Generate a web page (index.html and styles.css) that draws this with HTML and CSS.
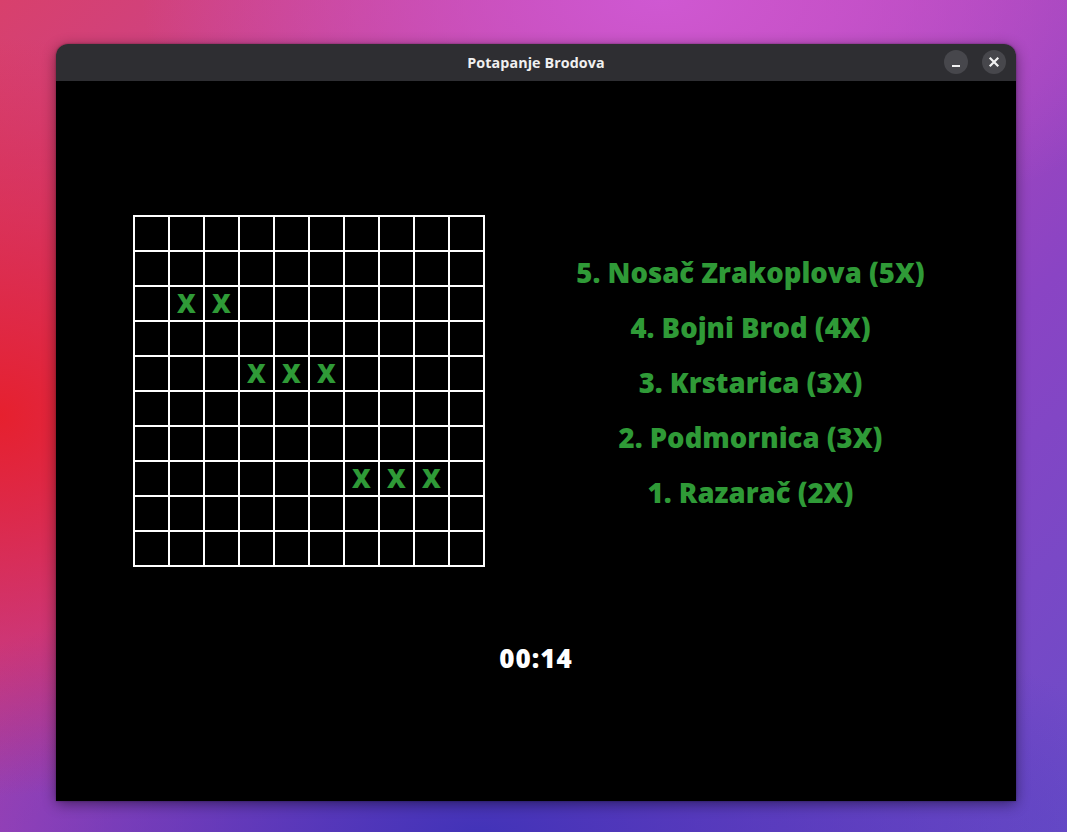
FILE: index.html
```html
<!DOCTYPE html>
<html lang="hr">
<head>
<meta charset="utf-8">
<title>Potapanje Brodova</title>
<link rel="stylesheet" href="styles.css">
</head>
<body>
<div class="window">
  <header class="titlebar">
    <span class="title">Potapanje Brodova</span>
    <div class="controls">
      <button class="wbtn" aria-label="minimize">
        <svg width="24" height="24" viewBox="0 0 24 24"><rect x="8" y="15" width="8" height="2" fill="#f2f2f2"/></svg>
      </button>
      <button class="wbtn" aria-label="close">
        <svg width="24" height="24" viewBox="0 0 24 24"><path d="M8.5 8.5 L15.5 15.5 M15.5 8.5 L8.5 15.5" stroke="#f2f2f2" stroke-width="2.2" stroke-linecap="square"/></svg>
      </button>
    </div>
  </header>
  <main class="content">
    <div class="row">
      <div class="board">
        <div class="cell"></div><div class="cell"></div><div class="cell"></div><div class="cell"></div><div class="cell"></div><div class="cell"></div><div class="cell"></div><div class="cell"></div><div class="cell"></div><div class="cell"></div>
        <div class="cell"></div><div class="cell"></div><div class="cell"></div><div class="cell"></div><div class="cell"></div><div class="cell"></div><div class="cell"></div><div class="cell"></div><div class="cell"></div><div class="cell"></div>
        <div class="cell"></div><div class="cell">X</div><div class="cell">X</div><div class="cell"></div><div class="cell"></div><div class="cell"></div><div class="cell"></div><div class="cell"></div><div class="cell"></div><div class="cell"></div>
        <div class="cell"></div><div class="cell"></div><div class="cell"></div><div class="cell"></div><div class="cell"></div><div class="cell"></div><div class="cell"></div><div class="cell"></div><div class="cell"></div><div class="cell"></div>
        <div class="cell"></div><div class="cell"></div><div class="cell"></div><div class="cell">X</div><div class="cell">X</div><div class="cell">X</div><div class="cell"></div><div class="cell"></div><div class="cell"></div><div class="cell"></div>
        <div class="cell"></div><div class="cell"></div><div class="cell"></div><div class="cell"></div><div class="cell"></div><div class="cell"></div><div class="cell"></div><div class="cell"></div><div class="cell"></div><div class="cell"></div>
        <div class="cell"></div><div class="cell"></div><div class="cell"></div><div class="cell"></div><div class="cell"></div><div class="cell"></div><div class="cell"></div><div class="cell"></div><div class="cell"></div><div class="cell"></div>
        <div class="cell"></div><div class="cell"></div><div class="cell"></div><div class="cell"></div><div class="cell"></div><div class="cell"></div><div class="cell">X</div><div class="cell">X</div><div class="cell">X</div><div class="cell"></div>
        <div class="cell"></div><div class="cell"></div><div class="cell"></div><div class="cell"></div><div class="cell"></div><div class="cell"></div><div class="cell"></div><div class="cell"></div><div class="cell"></div><div class="cell"></div>
        <div class="cell"></div><div class="cell"></div><div class="cell"></div><div class="cell"></div><div class="cell"></div><div class="cell"></div><div class="cell"></div><div class="cell"></div><div class="cell"></div><div class="cell"></div>
      </div>
      <ul class="ships">
        <li>5. Nosač Zrakoplova (5X)</li>
        <li>4. Bojni Brod (4X)</li>
        <li>3. Krstarica (3X)</li>
        <li>2. Podmornica (3X)</li>
        <li>1. Razarač (2X)</li>
      </ul>
    </div>
    <div class="timer">00:14</div>
  </main>
</div>
</body>
</html>
```

FILE: styles.css
```css
html, body {
  margin: 0;
  padding: 0;
  width: 1067px;
  height: 832px;
  overflow: hidden;
}

body {
  font-family: "Open Sans", "DejaVu Sans", sans-serif;
  background:
    radial-gradient(ellipse 420px 380px at 0% 50%, #e6202e 0%, rgba(230,32,46,0) 100%),
    radial-gradient(ellipse 520px 260px at 62% 0%, #cf58d2 0%, rgba(207,88,210,0) 100%),
    radial-gradient(ellipse 700px 260px at 45% 100%, #4233b8 0%, rgba(66,51,184,0) 100%),
    linear-gradient(135deg, #d8406c 0%, #b446b8 45%, #8a44c4 70%, #6a4cc8 100%);
  padding: 44px 0 0 56px;
  box-sizing: border-box;
}

.window {
  width: 960px;
  display: flex;
  flex-direction: column;
  border-radius: 12px 12px 0 0;
  overflow: hidden;
  box-shadow: 0 3px 14px rgba(0, 0, 0, 0.45), 0 0 2px rgba(0, 0, 0, 0.4);
}

.titlebar {
  height: 37px;
  background: #2e2e32;
  display: flex;
  align-items: center;
  justify-content: center;
  position: relative;
}

.title {
  color: #f0f0f0;
  font-weight: 700;
  font-size: 14.3px;
  letter-spacing: 0.1px;
}

.controls {
  position: absolute;
  right: 10px;
  top: 6px;
  display: flex;
  gap: 14px;
}

.wbtn {
  width: 24px;
  height: 24px;
  border-radius: 50%;
  border: none;
  padding: 0;
  margin: 0;
  background: #47474c;
  display: flex;
  align-items: center;
  justify-content: center;
}

.wbtn svg {
  display: block;
}

.content {
  height: 720px;
  background: #000;
  display: flex;
  flex-direction: column;
}

.row {
  display: flex;
  padding: 134px 0 0 77px;
}

.board {
  display: grid;
  grid-template-columns: repeat(10, 33px);
  grid-template-rows: repeat(10, 33px);
  gap: 2px;
  padding: 2px;
  background: #fff;
  flex: none;
}

.cell {
  background: #000;
  color: #2f9a37;
  font-weight: 800;
  font-size: 26px;
  line-height: 33px;
  text-align: center;
}

.ships {
  flex: 1;
  list-style: none;
  margin: 0;
  padding: 30px 0 0 0;
  text-align: center;
  color: #2f9a37;
  font-weight: 800;
  font-size: 27.5px;
  line-height: 55px;
}

.timer {
  margin-top: 76px;
  text-align: center;
  color: #fff;
  font-weight: 800;
  font-size: 26px;
  letter-spacing: 1px;
  line-height: 30px;
}
```
